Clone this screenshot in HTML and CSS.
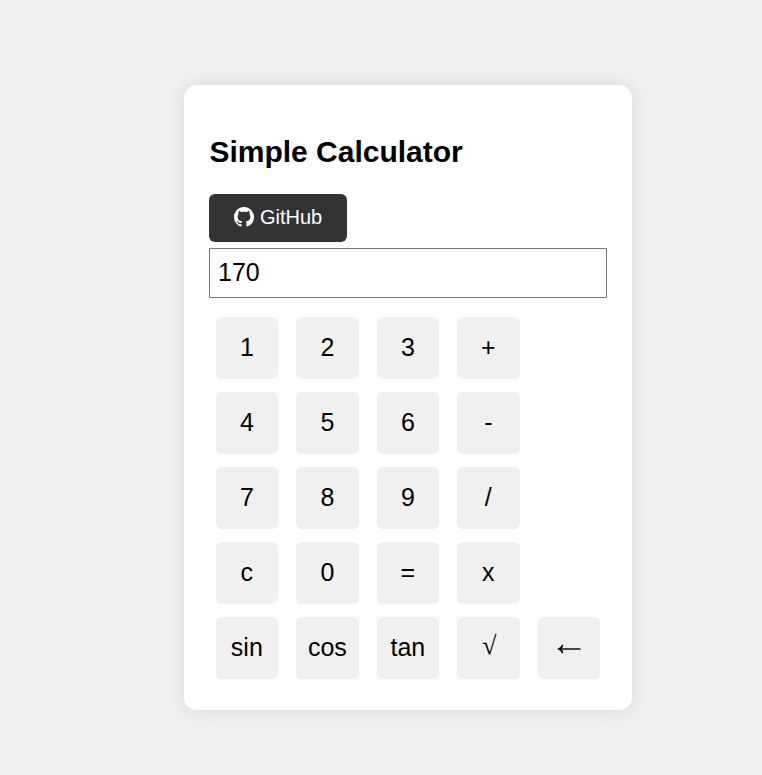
FILE: index.html
```html
<!DOCTYPE html>
<html lang="en">
<head>
<meta charset="utf-8">
<title>Simple Calculator</title>
<link rel="stylesheet" href="styles.css">
</head>
<body>
<main class="calculator">
<h1>Simple Calculator</h1>
<a class="github"><svg class="mark" viewBox="0 0 16 16" aria-hidden="true"><path fill="currentColor" d="M8 0C3.58 0 0 3.58 0 8c0 3.54 2.29 6.53 5.47 7.59.4.07.55-.17.55-.38 0-.19-.01-.82-.01-1.49-2.01.37-2.53-.49-2.69-.94-.09-.23-.48-.94-.82-1.13-.28-.15-.68-.52-.01-.53.63-.01 1.08.58 1.23.82.72 1.21 1.87.87 2.33.66.07-.52.28-.87.51-1.07-1.78-.2-3.64-.89-3.64-3.95 0-.87.31-1.59.82-2.15-.08-.2-.36-1.02.08-2.12 0 0 .67-.21 2.2.82.64-.18 1.32-.27 2-.27s1.36.09 2 .27c1.53-1.04 2.2-.82 2.2-.82.44 1.1.16 1.92.08 2.12.51.56.82 1.27.82 2.15 0 3.07-1.87 3.75-3.65 3.95.29.25.54.73.54 1.48 0 1.07-.01 1.93-.01 2.2 0 .21.15.46.55.38A8.01 8.01 0 0 0 16 8c0-4.42-3.58-8-8-8z"/></svg><span>GitHub</span></a>
<input class="display" type="text" value="170">
<div class="keys">
<div class="row"><button>1</button><button>2</button><button>3</button><button>+</button></div>
<div class="row"><button>4</button><button>5</button><button>6</button><button>-</button></div>
<div class="row"><button>7</button><button>8</button><button>9</button><button>/</button></div>
<div class="row"><button>c</button><button>0</button><button>=</button><button>x</button></div>
<div class="row"><button>sin</button><button>cos</button><button>tan</button><button class="root">√</button><button class="back" aria-label="Backspace"><svg viewBox="0 0 24 10"><path d="M2 5H23.5" fill="none" stroke="currentColor" stroke-width="1.4"/><path d="M5.2.6Q3.8 3.9.2 5Q3.8 6.1 5.2 9.4L6.4 8.8Q5.6 6.4 4.4 5Q5.6 3.6 6.4 1.2Z" fill="currentColor"/></svg></button></div>
</div>
</main>
</body>
</html>
```

FILE: styles.css
```css
* { box-sizing: border-box; }
body {
  margin: 0;
  min-height: 775px;
  padding: 85px 0 0 184px;
  background: #f0f0f0;
  font-family: "Liberation Sans", Arial, sans-serif;
  color: #000;
}
.calculator {
  width: 448px;
  height: 625px;
  padding: 49px 25px 25px;
  background: #fff;
  border-radius: 12.5px;
  box-shadow: 0 0 18px rgba(0, 0, 0, .1);
}
h1 {
  margin: 0 0 25px;
  padding-left: 0.4px;
  font-size: 30px;
  line-height: 35px;
}
.github {
  display: flex;
  align-items: center;
  width: 138px;
  height: 48px;
  padding: 0 0 2px 25px;
  gap: 6px;
  border-radius: 6px;
  background: #333;
  color: #fff;
  font-size: 20px;
}
.mark { width: 20px; height: 20px; }
.display {
  display: block;
  width: 398px;
  height: 50px;
  margin: 6px 0 19px;
  padding: 0 8px 2px;
  border: 1px solid #767676;
  border-radius: 1px;
  background: #fff;
  color: #000;
  font: 25px "Liberation Sans", Arial, sans-serif;
}
.keys {
  display: grid;
  gap: 13px;
  padding-left: 6.6px;
}
.row {
  display: grid;
  grid-template-columns: repeat(5, 62.5px);
  gap: 18px;
}
.row button {
  height: 62px;
  padding: 0 0 2px;
  border: 0;
  border-radius: 6px;
  background: #f0f0f0;
  color: #000;
  font: 25px "Liberation Sans", Arial, sans-serif;
}
.row .root {
  padding: 0 0 4px 2px;
  font-family: "Liberation Serif", serif;
  font-size: 26px;
}
.back svg {
  display: block;
  width: 24px;
  height: 10px;
  margin: 3px auto 0;
}
```
